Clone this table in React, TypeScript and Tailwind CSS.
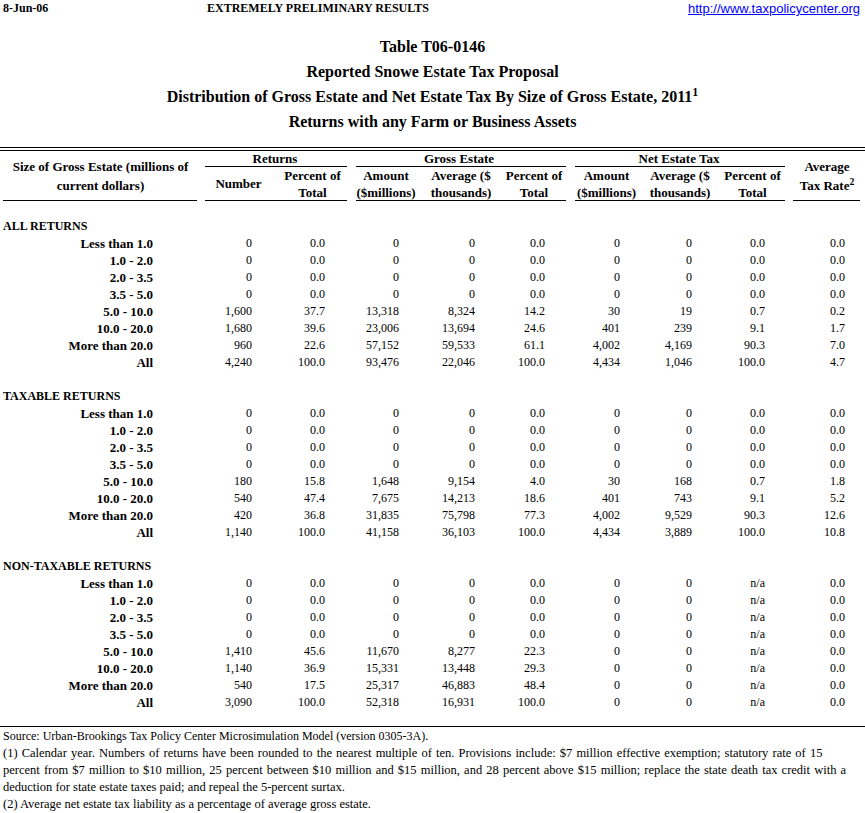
import React from "react";

type Row = { label: string; values: string[] };
type Section = { title: string; rows: Row[] };

const zeros = ["0", "0.0", "0", "0", "0.0", "0", "0", "0.0", "0.0"];
const zerosNA = ["0", "0.0", "0", "0", "0.0", "0", "0", "n/a", "0.0"];

const sections: Section[] = [
  {
    title: "ALL RETURNS",
    rows: [
      { label: "Less than 1.0", values: zeros },
      { label: "1.0 - 2.0", values: zeros },
      { label: "2.0 - 3.5", values: zeros },
      { label: "3.5 - 5.0", values: zeros },
      { label: "5.0 - 10.0", values: ["1,600", "37.7", "13,318", "8,324", "14.2", "30", "19", "0.7", "0.2"] },
      { label: "10.0 - 20.0", values: ["1,680", "39.6", "23,006", "13,694", "24.6", "401", "239", "9.1", "1.7"] },
      { label: "More than 20.0", values: ["960", "22.6", "57,152", "59,533", "61.1", "4,002", "4,169", "90.3", "7.0"] },
      { label: "All", values: ["4,240", "100.0", "93,476", "22,046", "100.0", "4,434", "1,046", "100.0", "4.7"] },
    ],
  },
  {
    title: "TAXABLE RETURNS",
    rows: [
      { label: "Less than 1.0", values: zeros },
      { label: "1.0 - 2.0", values: zeros },
      { label: "2.0 - 3.5", values: zeros },
      { label: "3.5 - 5.0", values: zeros },
      { label: "5.0 - 10.0", values: ["180", "15.8", "1,648", "9,154", "4.0", "30", "168", "0.7", "1.8"] },
      { label: "10.0 - 20.0", values: ["540", "47.4", "7,675", "14,213", "18.6", "401", "743", "9.1", "5.2"] },
      { label: "More than 20.0", values: ["420", "36.8", "31,835", "75,798", "77.3", "4,002", "9,529", "90.3", "12.6"] },
      { label: "All", values: ["1,140", "100.0", "41,158", "36,103", "100.0", "4,434", "3,889", "100.0", "10.8"] },
    ],
  },
  {
    title: "NON-TAXABLE RETURNS",
    rows: [
      { label: "Less than 1.0", values: zerosNA },
      { label: "1.0 - 2.0", values: zerosNA },
      { label: "2.0 - 3.5", values: zerosNA },
      { label: "3.5 - 5.0", values: zerosNA },
      { label: "5.0 - 10.0", values: ["1,410", "45.6", "11,670", "8,277", "22.3", "0", "0", "n/a", "0.0"] },
      { label: "10.0 - 20.0", values: ["1,140", "36.9", "15,331", "13,448", "29.3", "0", "0", "n/a", "0.0"] },
      { label: "More than 20.0", values: ["540", "17.5", "25,317", "46,883", "48.4", "0", "0", "n/a", "0.0"] },
      { label: "All", values: ["3,090", "100.0", "52,318", "16,931", "100.0", "0", "0", "n/a", "0.0"] },
    ],
  },
];

const cols = "grid grid-cols-[201px_75px_73px_74px_76px_70px_75px_72px_73px_76px]";

function DataRow({ row }: { row: Row }) {
  return (
    <div className={`${cols} h-[17px] leading-[17px]`}>
      <div className="text-right pr-[48px] font-bold text-[13px] whitespace-nowrap">{row.label}</div>
      {row.values.map((v, i) => (
        <div key={i} className={`text-right ${i === 8 ? "pr-[20px]" : "pr-[24px]"}`}>
          {v}
        </div>
      ))}
    </div>
  );
}

export default function App() {
  return (
    <div className="w-[865px] h-[813px] bg-white text-black font-['Liberation_Serif',serif] text-[12px] overflow-hidden">
      {/* top strip */}
      <div className="flex h-[17px] leading-[17px] font-bold">
        <div className="w-[207px] pl-[3px]">8-Jun-06</div>
        <div className="flex-1">EXTREMELY PRELIMINARY RESULTS</div>
        <a
          href="#"
          className="pr-[5px] font-['Liberation_Sans',Arial,sans-serif] font-normal text-[13px] text-[#0000ff] underline"
        >
          http://www.taxpolicycenter.org
        </a>
      </div>
      <div className="h-[17px]"></div>

      {/* titles */}
      <div className="text-center font-bold text-[16px]">
        <div className="h-[25px] leading-[25px]">Table T06-0146</div>
        <div className="h-[25px] leading-[25px]">Reported Snowe Estate Tax Proposal</div>
        <div className="h-[25px] leading-[25px]">
          Distribution of Gross Estate and Net Estate Tax By Size of Gross Estate, 2011<sup>1</sup>
        </div>
        <div className="h-[25px] leading-[25px]">Returns with any Farm or Business Assets</div>
      </div>
      <div className="h-[13px]"></div>
      <div className="h-px bg-black"></div>
      <div className="h-[2px]"></div>
      <div className="h-px bg-black"></div>

      {/* column headers */}
      <div className={`${cols} grid-rows-[15px_1px_33px_1px] font-bold text-[13px] whitespace-nowrap`}>
        <div className="col-start-1 row-start-1 row-span-3 flex items-center justify-center text-center leading-[19px]">
          <span>
            Size of Gross Estate (millions of
            <br />
            current dollars)
          </span>
        </div>
        <div className="col-start-2 col-span-2 row-start-1 text-center leading-[15px]">Returns</div>
        <div className="col-start-4 col-span-3 row-start-1 text-center leading-[15px]">Gross Estate</div>
        <div className="col-start-7 col-span-3 row-start-1 text-center leading-[15px]">Net Estate Tax</div>
        <div className="col-start-10 row-start-1 row-span-3 flex items-center justify-center text-center leading-[19px]">
          <span>
            Average
            <br />
            Tax Rate<sup>2</sup>
          </span>
        </div>

        <div className="col-start-2 col-span-2 row-start-2 ml-[4px] mr-[2px] bg-black"></div>
        <div className="col-start-4 col-span-3 row-start-2 ml-[7px] mr-[3px] bg-black"></div>
        <div className="col-start-7 col-span-3 row-start-2 ml-[6px] mr-[4px] bg-black"></div>

        <div className="col-start-2 row-start-3 flex items-center justify-center leading-[17px]">Number</div>
        <div className="col-start-3 row-start-3 flex items-center justify-center text-center leading-[17px]">
          <span>
            Percent of
            <br />
            Total
          </span>
        </div>
        <div className="col-start-4 row-start-3 flex items-center justify-center text-center leading-[17px]">
          <span>
            Amount
            <br />
            ($millions)
          </span>
        </div>
        <div className="col-start-5 row-start-3 flex items-center justify-center text-center leading-[17px]">
          <span>
            Average ($
            <br />
            thousands)
          </span>
        </div>
        <div className="col-start-6 row-start-3 flex items-center justify-center text-center leading-[17px]">
          <span>
            Percent of
            <br />
            Total
          </span>
        </div>
        <div className="col-start-7 row-start-3 flex items-center justify-center text-center leading-[17px]">
          <span>
            Amount
            <br />
            ($millions)
          </span>
        </div>
        <div className="col-start-8 row-start-3 flex items-center justify-center text-center leading-[17px]">
          <span>
            Average ($
            <br />
            thousands)
          </span>
        </div>
        <div className="col-start-9 row-start-3 flex items-center justify-center text-center leading-[17px]">
          <span>
            Percent of
            <br />
            Total
          </span>
        </div>

        <div className="col-start-1 row-start-4 ml-[3px] mr-[4px] bg-black"></div>
        <div className="col-start-2 col-span-2 row-start-4 ml-[4px] mr-[2px] bg-black"></div>
        <div className="col-start-4 col-span-3 row-start-4 ml-[7px] mr-[3px] bg-black"></div>
        <div className="col-start-7 col-span-3 row-start-4 ml-[6px] mr-[4px] bg-black"></div>
        <div className="col-start-10 row-start-4 ml-[4px] mr-[5px] bg-black"></div>
      </div>

      {/* body */}
      {sections.map((s) => (
        <div key={s.title}>
          <div className="h-[17px]"></div>
          <div className="h-[17px] leading-[17px] pl-[3px] font-bold">{s.title}</div>
          {s.rows.map((r) => (
            <DataRow key={r.label} row={r} />
          ))}
        </div>
      ))}

      <div className="h-[15px]"></div>
      <div className="h-px bg-black"></div>
      <div className="h-px"></div>

      {/* notes */}
      <div className="pl-[3px] leading-[17px] whitespace-nowrap">
        <div>Source: Urban-Brookings Tax Policy Center Microsimulation Model (version 0305-3A).</div>
        <div className="text-[12.5px] [word-spacing:1px]">
          (1) Calendar year. Numbers of returns have been rounded to the nearest multiple of ten. Provisions include: $7
          million effective exemption; statutory rate of 15
        </div>
        <div className="text-[12.5px] [word-spacing:1px]">
          percent from $7 million to $10 million, 25 percent between $10 million and $15 million, and 28 percent above $15
          million; replace the state death tax credit with a
        </div>
        <div className="text-[12.5px]">deduction for state estate taxes paid; and repeal the 5-percent surtax.</div>
        <div className="text-[12.5px]">(2) Average net estate tax liability as a percentage of average gross estate.</div>
      </div>
    </div>
  );
}
